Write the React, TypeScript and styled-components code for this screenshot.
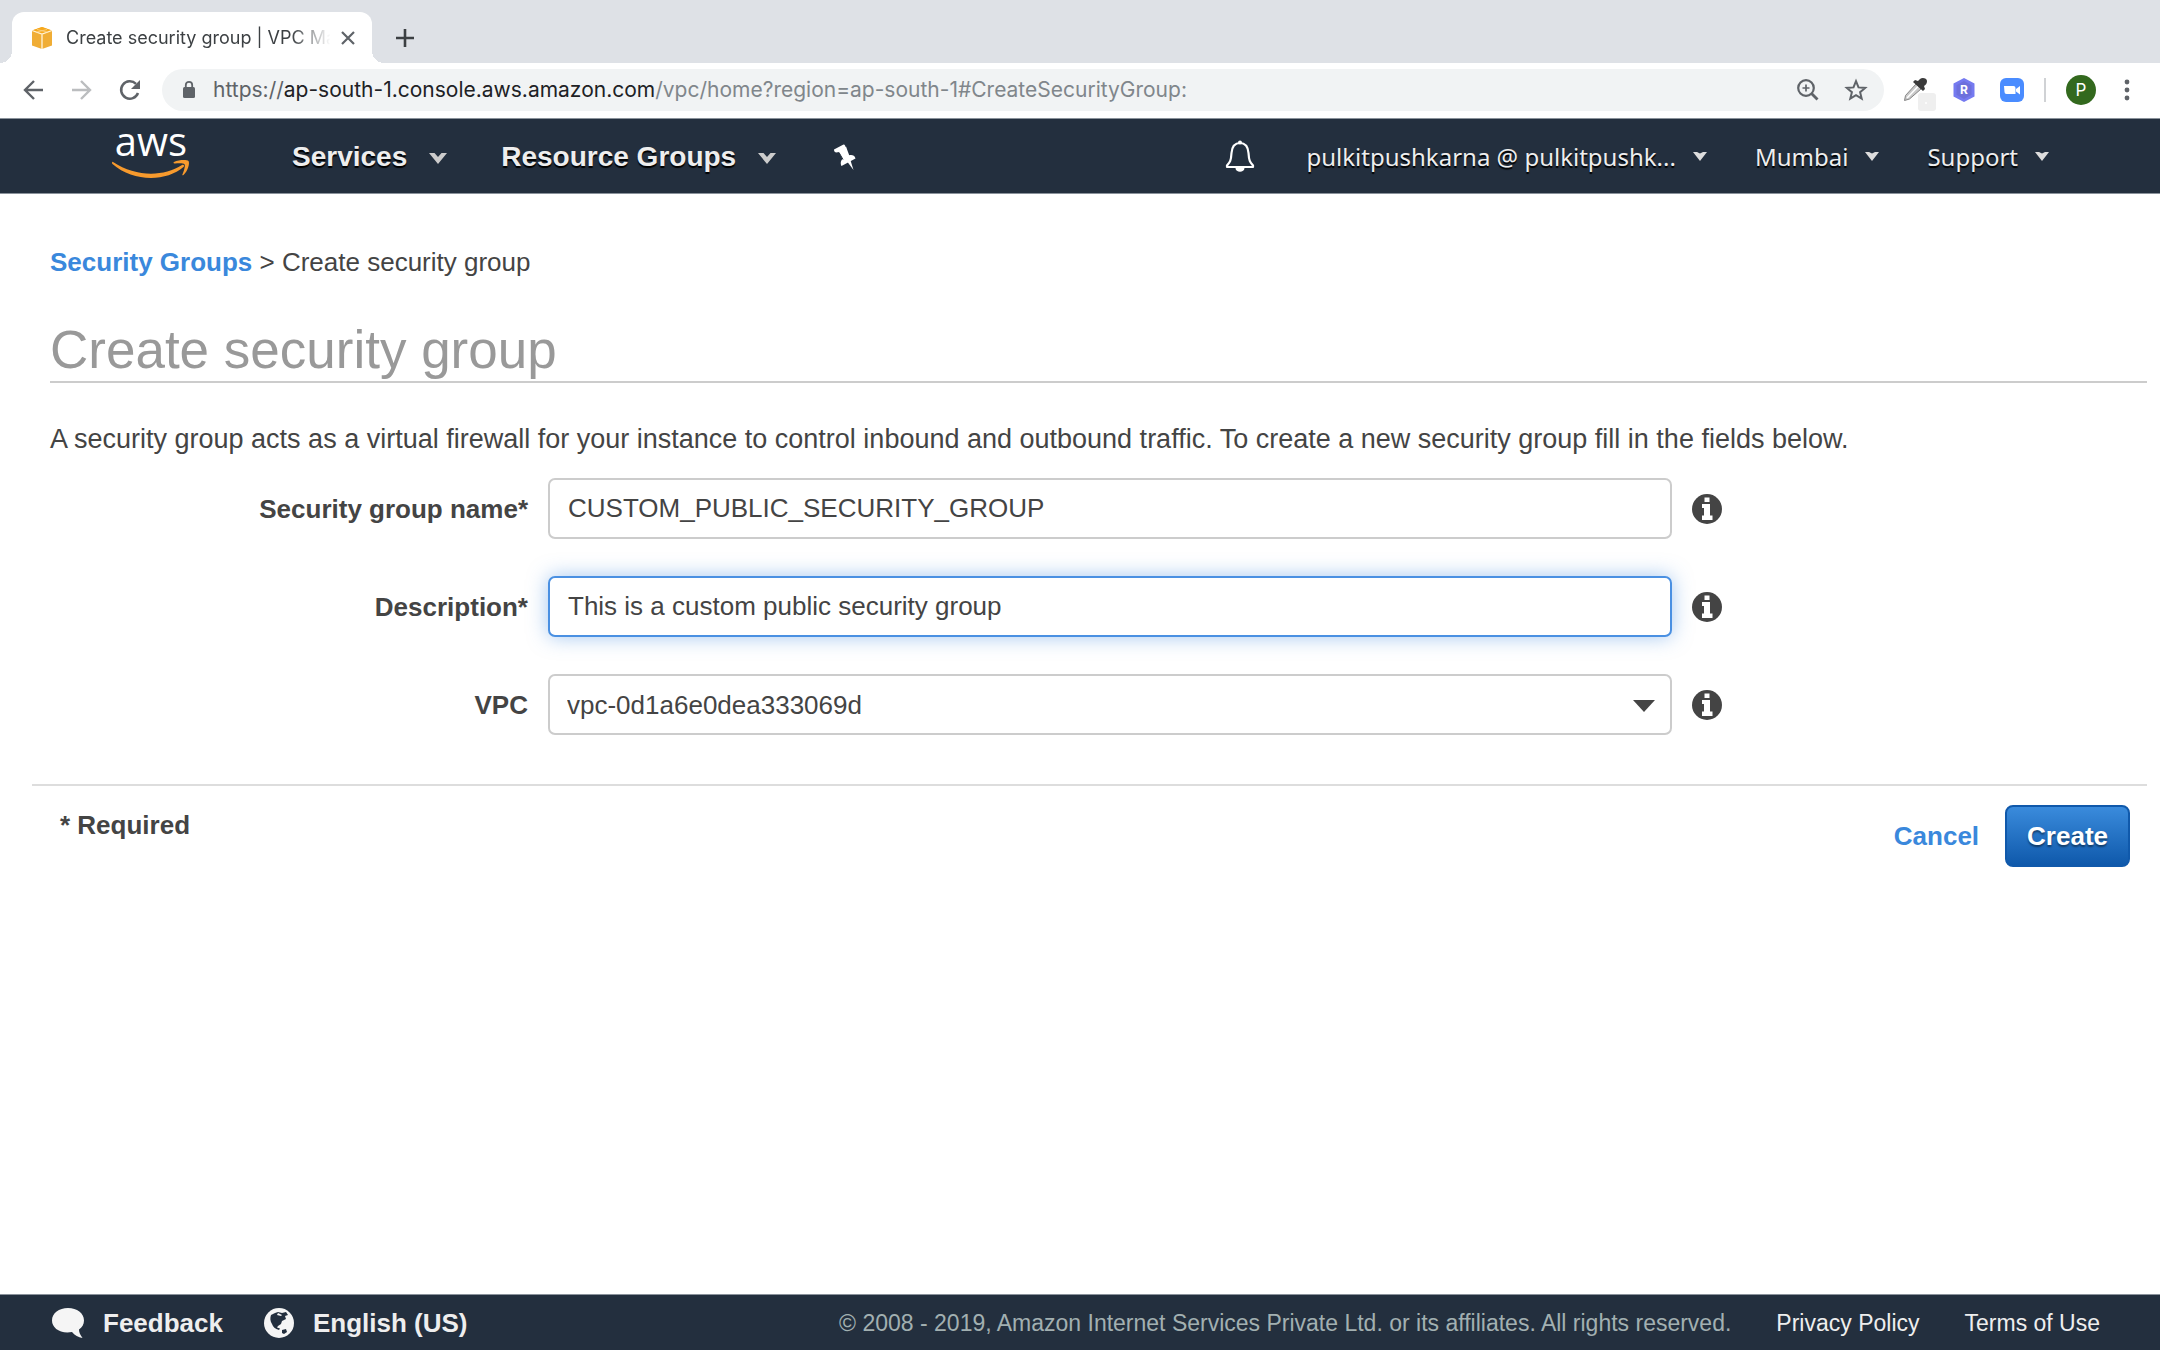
import React, { useState } from "react";
import styled, { createGlobalStyle, css } from "styled-components";

const sans = `"Liberation Sans", Arial, Helvetica, sans-serif`;
const ui = `Inter, Roboto, sans-serif`;
const humanist = `"Noto Sans", "Open Sans", sans-serif`;

const GlobalStyle = createGlobalStyle`
  * { box-sizing: border-box; }
  body { margin: 0; background: #fff; color: #444; font: 26px/32px ${sans}; }
  a { text-decoration: none; color: inherit; }
  button { border: 0; padding: 0; background: none; color: inherit; font: inherit; cursor: pointer; }
  svg { display: block; flex: none; overflow: visible; }
`;

const Page = styled.div`
  display: flex;
  flex-direction: column;
  min-height: 100vh;
`;

/* Browser chrome */
const TabStrip = styled.div`
  display: flex;
  align-items: center;
  height: 63px;
  padding: 12px 12px 0;
  background: #dee1e6;
`;

const Tab = styled.div`
  position: relative;
  display: flex;
  align-items: center;
  gap: 4px;
  width: 360px;
  height: 51px;
  padding: 0 16px 0 18px;
  border-radius: 12px 12px 0 0;
  background: #fff;
  &::before,
  &::after {
    content: "";
    position: absolute;
    bottom: 0;
    width: 12px;
    height: 12px;
  }
  &::before {
    left: -12px;
    background: radial-gradient(circle at 0 0, transparent 12px, #fff 12px);
  }
  &::after {
    right: -12px;
    background: radial-gradient(circle at 100% 0, transparent 12px, #fff 12px);
  }
`;

const TabTitle = styled.span`
  flex: 1;
  padding-left: 8px;
  white-space: nowrap;
  color: #3c4043;
  font: 18px/24px ${ui};
  mask-image: linear-gradient(90deg, #000 84%, transparent 98%);
`;

const IconButton = styled.button<{ $tone?: string; $width?: number }>`
  display: grid;
  place-items: center;
  width: ${(p) => (p.$width ? `${p.$width}px` : "auto")};
  color: ${(p) => p.$tone ?? "#5f6368"};
`;

const NewTab = styled(IconButton)`
  margin-left: 24px;
`;

const Toolbar = styled.div`
  display: flex;
  align-items: center;
  gap: 24px;
  height: 55px;
  padding: 0 26px 2px 22px;
  background: #fff;
`;

const Omnibox = styled.div`
  display: flex;
  flex: 1;
  align-items: center;
  gap: 24px;
  height: 42px;
  margin: 0 -4px;
  padding: 0 16px 0 19px;
  border-radius: 21px;
  background: #f1f3f4;
`;

const Address = styled.div`
  display: flex;
  flex: 1;
  align-items: center;
  gap: 16px;
`;

const Url = styled.span`
  color: #80868b;
  font: 21px/28px ${ui};
  white-space: nowrap;
`;
const Scheme = styled.span`
  color: #5f6368;
`;
const Host = styled.span`
  color: #202124;
`;

const Divider = styled.span`
  width: 2px;
  height: 24px;
  margin: 0 -4px;
  background: #d0d2d5;
`;

const Avatar = styled(IconButton)`
  width: 30px;
  height: 30px;
  border-radius: 50%;
  background: #33691e;
  color: #fff;
  font: 17px/30px ${ui};
`;

/* Console header */
const Header = styled.header`
  display: flex;
  align-items: center;
  height: 76px;
  padding: 2px 111px 0;
  border: solid #8a929b;
  border-width: 1px 0;
  background: #232f3e;
  color: #eee;
`;

const LogoLink = styled.a`
  margin-right: 101px;
`;

const NavGroup = styled.nav<{ $gap: number }>`
  display: flex;
  align-items: center;
  gap: ${(p) => p.$gap}px;
`;

const NavButton = styled.button<{ $strong?: boolean }>`
  display: flex;
  align-items: center;
  text-shadow: 0 2px 1px #000;
  white-space: nowrap;
  ${(p) =>
    p.$strong
      ? css`
          gap: 22px;
          font: bold 28px/36px ${sans};
        `
      : css`
          gap: 17px;
          font: 24px/32px ${humanist};
        `}
`;

const Spacer = styled.div`
  flex: 1;
`;

/* Content */
const Main = styled.main`
  flex: 1;
  padding: 52px 13px 0 32px;
`;

const Intro = styled.div`
  padding-left: 18px;
`;

const BlueLink = styled.a`
  color: #3a88dc;
  font-weight: bold;
`;

const Title = styled.h1`
  margin: 41px 0 40px;
  border-bottom: 2px solid #ccc;
  color: #999;
  font: 53px/62px ${sans};
`;

const Lead = styled.p`
  margin: 0;
  font-size: 27px;
`;

const Form = styled.form`
  display: flex;
  flex-direction: column;
`;

const Fields = styled.div`
  display: flex;
  flex-direction: column;
  gap: 37px;
  padding: 23px 0 49px;
`;

const Field = styled.div`
  display: grid;
  grid-template-columns: 496px minmax(200px, 1124px) 30px;
  align-items: center;
  column-gap: 20px;
`;

const Label = styled.label`
  font-weight: bold;
  text-align: right;
`;

const control = css`
  width: 100%;
  height: 61px;
  padding: 0 18px;
  border: 2px solid #ccc;
  border-radius: 7px;
  outline: 0;
  background: #fff;
  color: #444;
  font: 26px/32px ${sans};
`;

const TextInput = styled.input<{ $active?: boolean }>`
  ${control}
  ${(p) =>
    p.$active &&
    css`
      border-color: #4a90e2;
      box-shadow: 0 0 20px rgba(74, 144, 226, 0.5);
    `}
`;

const SelectWrap = styled.div`
  position: relative;
  & > svg {
    position: absolute;
    top: 26px;
    right: 17px;
    pointer-events: none;
  }
`;

const Select = styled.select`
  ${control}
  padding: 0 17px;
  appearance: none;
`;

const Actions = styled.div`
  display: flex;
  align-items: flex-start;
  padding: 19px 17px 0 28px;
  border-top: 2px solid #ddd;
`;

const Required = styled.strong`
  flex: 1;
  padding-top: 4px;
`;

const Cancel = styled(BlueLink)`
  padding: 15px 26px;
`;

const Submit = styled.button`
  height: 62px;
  padding: 0 20px;
  border: 2px solid #1059ab;
  border-radius: 8px;
  background: linear-gradient(#3a8bdc, #0f59ab);
  color: #fff;
  font-weight: bold;
  text-shadow: 0 2px 2px rgba(0, 0, 0, 0.45);
`;

/* Footer */
const Footer = styled.footer`
  display: flex;
  align-items: center;
  height: 56px;
  padding: 0 60px 0 52px;
  border-top: 1px solid #8a929b;
  background: #232f3e;
  color: #eee;
`;

const FooterButton = styled.button`
  display: flex;
  align-items: center;
  gap: 19px;
  margin-right: 41px;
  font-weight: bold;
`;

const Legal = styled.div`
  display: flex;
  gap: 45px;
  font-size: 23px;
  white-space: nowrap;
`;
const Copyright = styled.span`
  color: #a2b0b1;
`;

/* Drawings */
const CubeIcon = () => (
  <svg width="24" height="24" viewBox="0 0 24 24">
    <path d="M12 1l10 3.500v15L12 23 2 19.500v-15z" fill="#f0ad35" />
    <path d="M12 1l10 3.500L12 8 2 4.500z" fill="#f7a81b" />
    <path d="M2 4.500L12 8l10-3.500M12 8v15" fill="none" stroke="#fff3d8" strokeWidth="1.300" />
    <path d="M7 3.500l10 2.500M17 3.500L7 6" stroke="#fbd58c" strokeWidth=".8" />
  </svg>
);

const CloseIcon = () => (
  <svg width="16" height="16" viewBox="0 0 16 16" stroke="currentColor" strokeWidth="2.200">
    <path d="M2 2l12 12M14 2L2 14" />
  </svg>
);

const PlusIcon = () => (
  <svg width="18" height="18" viewBox="0 0 18 18" stroke="currentColor" strokeWidth="2.600">
    <path d="M9 0v18M0 9h18" />
  </svg>
);

const Arrow = ({ flip = false }: { flip?: boolean }) => (
  <svg width="24" height="24" viewBox="0 0 24 24" fill="none" stroke="currentColor" strokeWidth="2.400">
    <path d={flip ? "M2 12h18M11 3l9 9-9 9" : "M21 12H3M12 3l-9 9 9 9"} />
  </svg>
);

const ReloadIcon = () => (
  <svg width="24" height="24" viewBox="0 0 24 24">
    <path d="M20 15a8.700 8.700 0 1 1-2-9.200" fill="none" stroke="currentColor" strokeWidth="2.500" />
    <path d="M22 2v9h-9z" fill="currentColor" />
  </svg>
);

const LockIcon = () => (
  <svg width="16" height="20" viewBox="0 0 16 20">
    <rect x="2" y="7" width="12" height="11" rx="1.500" fill="#5f6368" />
    <path d="M4.800 8V5a3.200 3.200 0 0 1 6.400 0v3" fill="none" stroke="#5f6368" strokeWidth="1.800" />
  </svg>
);

const ZoomIcon = () => (
  <svg width="24" height="24" viewBox="0 0 24 24" fill="none" stroke="currentColor">
    <circle cx="10" cy="10" r="7.800" strokeWidth="2.200" />
    <path d="M15.500 15.500l6 6" strokeWidth="2.800" />
    <path d="M10 6.500v7M6.500 10h7" strokeWidth="1.700" />
  </svg>
);

const StarIcon = () => (
  <svg width="24" height="24" viewBox="0 0 24 24" fill="none" stroke="currentColor" strokeWidth="2">
    <path d="M12 3.200l2.500 6.200 6.700.5-5.100 4.300 1.600 6.500-5.700-3.500-5.700 3.500 1.600-6.500-5.100-4.300 6.700-.5z" />
  </svg>
);

const DropperIcon = () => (
  <svg width="24" height="24" viewBox="0 0 24 24">
    <rect x="14" y="15" width="18" height="18" rx="3" fill="#efefef" />
    <circle cx="22" cy="25" r="1" fill="#fff" />
    <path d="M0.500 22.500l1-5L12 6l5 5L5.500 21z" fill="#c9c9c9" stroke="#858585" />
    <path d="M3 20L14 8.500" stroke="#fff" strokeWidth="1.600" />
    <path d="M9 4l2-2 3 1 2-2c2-2 7-1 7 2 0 2-1 4-3 5l1 3-2 2z" fill="#3b3b3b" />
  </svg>
);

const HexIcon = () => (
  <svg width="24" height="24" viewBox="0 0 24 24">
    <path d="M12 0l10.500 5.500v13L12 24 1.500 18.500v-13z" fill="#757af0" />
    <path d="M12 3l7.500 4.200v9.600L12 21l-7.500-4.200V7.200z" fill="#6d70dc" />
    <text x="12" y="16" fill="#fff" fontFamily="Inter, sans-serif" fontSize="12" fontWeight="700" textAnchor="middle">R</text>
  </svg>
);

const CameraIcon = () => (
  <svg width="24" height="24" viewBox="0 0 24 24">
    <rect width="24" height="24" rx="6" fill="#4a8cff" />
    <path d="M4 8h9.500a2 2 0 0 1 2 2v6H6.500a2 2 0 0 1-2-2z" fill="#fff" />
    <path d="M16 11l4-3v8.500l-4-3z" fill="#fff" />
  </svg>
);

const DotsIcon = () => (
  <svg width="6" height="22" viewBox="0 0 6 22" fill="currentColor">
    <circle cx="3" cy="3" r="2.400" />
    <circle cx="3" cy="11" r="2.400" />
    <circle cx="3" cy="19" r="2.400" />
  </svg>
);

const AwsLogo = () => (
  <svg width="80" height="72" viewBox="0 0 80 72">
    <text x="40" y="35" fill="#fff" fontFamily="Open Sans, Noto Sans, sans-serif" fontSize="40" fontWeight="500" textAnchor="middle">aws</text>
    <g transform="translate(0 10)" fill="#f79a2d">
      <path d="M2 31c23 15 50 15 69 3 1.500-1 3 .500 1.500 2C55 51 22 51 1.500 33c-1.200-1 0-2.600.5-2z" />
      <path d="M63 31c5-2.500 13-2.500 14.500-1 1.500 2-.5 10-5 14-1 .700-1.500.200-1-.800 1.500-3.500 3-8.500 2-10-1-1.200-6-1-9.500-.700-1.500.200-2-.8-1-1.500z" />
    </g>
  </svg>
);

const Caret = () => (
  <svg width="18" height="8" viewBox="0 0 18 8">
    <path d="M0 0h5.500L9 4l3.500-4H18l-9 11z" fill="#ccc" />
  </svg>
);

const SmallCaret = () => (
  <svg width="14" height="10" viewBox="0 0 14 10">
    <path d="M0 0h4l3 1.500L10 0h4L7 9z" fill="#ddd" />
  </svg>
);

const PinIcon = () => (
  <svg width="22" height="26" viewBox="0 0 22 26" fill="#fff">
    <path d="M0 5.500L9.500.5c1.500 0 2.500 2 1.500 3.500l-.5 1.500 4 6c3-1 6-.5 7 3L7.500 22c-1.500-3-.5-6 1.500-7.500L5.500 8 2 8.500C.5 8 0 7 0 5.500z" />
    <path d="M4 6.500l8-4 4 11-6 4z" />
    <path d="M13.500 18l3-1.500 3 9.500z" />
    <path d="M5 8.500l4 7" stroke="#232f3e" />
  </svg>
);

const BellIcon = () => (
  <svg width="30" height="34" viewBox="0 0 30 34">
    <path d="M15 3c-6 0-8 4-8.500 10-.5 8-1.500 9-4.500 12.500V27h26v-1.500C25 22 24 21 23.500 13 23 7 21 3 15 3z" fill="none" stroke="#fff" strokeWidth="2.200" strokeLinejoin="round" />
    <circle cx="15" cy="2.500" r="2" fill="#fff" />
    <path d="M10.500 28h9c0 5-9 5-9 0z" fill="#fff" />
  </svg>
);

const InfoIcon = () => (
  <svg width="30" height="30" viewBox="0 0 30 30">
    <circle cx="15" cy="15" r="15" fill="#444" />
    <path d="M12.500 3.500h5v4.500h-5zM10 10h8v11.500h2.500V26h-10.500v-4.500H12V14h-2z" fill="#fff" />
  </svg>
);

const DropArrow = () => (
  <svg width="22" height="12" viewBox="0 0 22 12">
    <path d="M0 0h22L11 12z" fill="#444" />
  </svg>
);

const BubbleIcon = () => (
  <svg width="32" height="32" viewBox="0 0 32 32">
    <path d="M16 1c9 0 16 5 16 12.500 0 4-2 7-5 9 0 3 1 5 3.500 8.500-4-.5-8-3-10.500-6C8 27 0 21 0 13.500 0 6 7 1 16 1z" fill="#f5f5f5" />
  </svg>
);

const GlobeIcon = () => (
  <svg width="30" height="30" viewBox="0 0 30 30">
    <circle cx="15" cy="15" r="15" fill="#f5f5f5" />
    <path d="M7 7l4-2 3-1 4 1 4-1 2 3-3 1 1 3-4 2-1 3-3 2-1 1.500 3 1-1 1.500c-4-1-6-3-7-6-2-3-2-6-1-9z" fill="#232f3e" />
    <path d="M14 5l4 2-1 1-4-1z" fill="#f5f5f5" />
    <path d="M18 22l4-1 1 3-3 2-2-1z" fill="#232f3e" />
  </svg>
);

function InfoButton({ about }: { about: string }) {
  return (
    <IconButton type="button" aria-label={`About ${about}`}>
      <InfoIcon />
    </IconButton>
  );
}

export default function App() {
  const [name, setName] = useState("CUSTOM_PUBLIC_SECURITY_GROUP");
  const [description, setDescription] = useState("This is a custom public security group");

  return (
    <Page>
      <GlobalStyle />
      <TabStrip>
        <Tab>
          <CubeIcon />
          <TabTitle>Create security group | VPC Ma</TabTitle>
          <IconButton aria-label="Close tab"><CloseIcon /></IconButton>
        </Tab>
        <NewTab aria-label="New tab" $tone="#3c4043"><PlusIcon /></NewTab>
      </TabStrip>
      <Toolbar>
        <IconButton aria-label="Back"><Arrow /></IconButton>
        <IconButton aria-label="Forward" $tone="#bbbdbf"><Arrow flip /></IconButton>
        <IconButton aria-label="Reload"><ReloadIcon /></IconButton>
        <Omnibox>
          <Address>
            <LockIcon />
            <Url>
              <Scheme>https://</Scheme>
              <Host>ap-south-1.console.aws.amazon.com</Host>
              /vpc/home?region=ap-south-1#CreateSecurityGroup:
            </Url>
          </Address>
          <IconButton aria-label="Zoom"><ZoomIcon /></IconButton>
          <IconButton aria-label="Bookmark"><StarIcon /></IconButton>
        </Omnibox>
        <IconButton aria-label="Color picker"><DropperIcon /></IconButton>
        <IconButton aria-label="R extension"><HexIcon /></IconButton>
        <IconButton aria-label="Video meeting"><CameraIcon /></IconButton>
        <Divider />
        <Avatar aria-label="Profile">P</Avatar>
        <IconButton aria-label="Menu" $width={14}><DotsIcon /></IconButton>
      </Toolbar>

      <Header>
        <LogoLink href="#" aria-label="AWS home"><AwsLogo /></LogoLink>
        <NavGroup $gap={54}>
          <NavButton $strong>Services<Caret /></NavButton>
          <NavButton $strong>Resource Groups<Caret /></NavButton>
          <IconButton aria-label="Pin shortcuts" $width={30}><PinIcon /></IconButton>
        </NavGroup>
        <Spacer />
        <NavGroup $gap={48}>
          <IconButton aria-label="Notifications" $width={36}><BellIcon /></IconButton>
          <NavButton>pulkitpushkarna @ pulkitpushk...<SmallCaret /></NavButton>
          <NavButton>Mumbai<SmallCaret /></NavButton>
          <NavButton>Support<SmallCaret /></NavButton>
        </NavGroup>
      </Header>

      <Main>
        <Intro>
          <div>
            <BlueLink href="#">Security Groups</BlueLink> &gt; Create security group
          </div>
          <Title>Create security group</Title>
          <Lead>
            A security group acts as a virtual firewall for your instance to control inbound and outbound traffic. To
            create a new security group fill in the fields below.
          </Lead>
        </Intro>
        <Form onSubmit={(e) => e.preventDefault()}>
          <Fields>
            <Field>
              <Label htmlFor="name">Security group name*</Label>
              <TextInput id="name" value={name} onChange={(e) => setName(e.target.value)} />
              <InfoButton about="security group name" />
            </Field>
            <Field>
              <Label htmlFor="description">Description*</Label>
              <TextInput
                id="description"
                $active
                value={description}
                onChange={(e) => setDescription(e.target.value)}
              />
              <InfoButton about="description" />
            </Field>
            <Field>
              <Label htmlFor="vpc">VPC</Label>
              <SelectWrap>
                <Select id="vpc">
                  <option>vpc-0d1a6e0dea333069d</option>
                </Select>
                <DropArrow />
              </SelectWrap>
              <InfoButton about="VPC" />
            </Field>
          </Fields>
          <Actions>
            <Required>* Required</Required>
            <Cancel href="#">Cancel</Cancel>
            <Submit type="submit">Create</Submit>
          </Actions>
        </Form>
      </Main>

      <Footer>
        <FooterButton><BubbleIcon />Feedback</FooterButton>
        <FooterButton><GlobeIcon />English (US)</FooterButton>
        <Spacer />
        <Legal>
          <Copyright>© 2008 - 2019, Amazon Internet Services Private Ltd. or its affiliates. All rights reserved.</Copyright>
          <a href="#">Privacy Policy</a>
          <a href="#">Terms of Use</a>
        </Legal>
      </Footer>
    </Page>
  );
}
